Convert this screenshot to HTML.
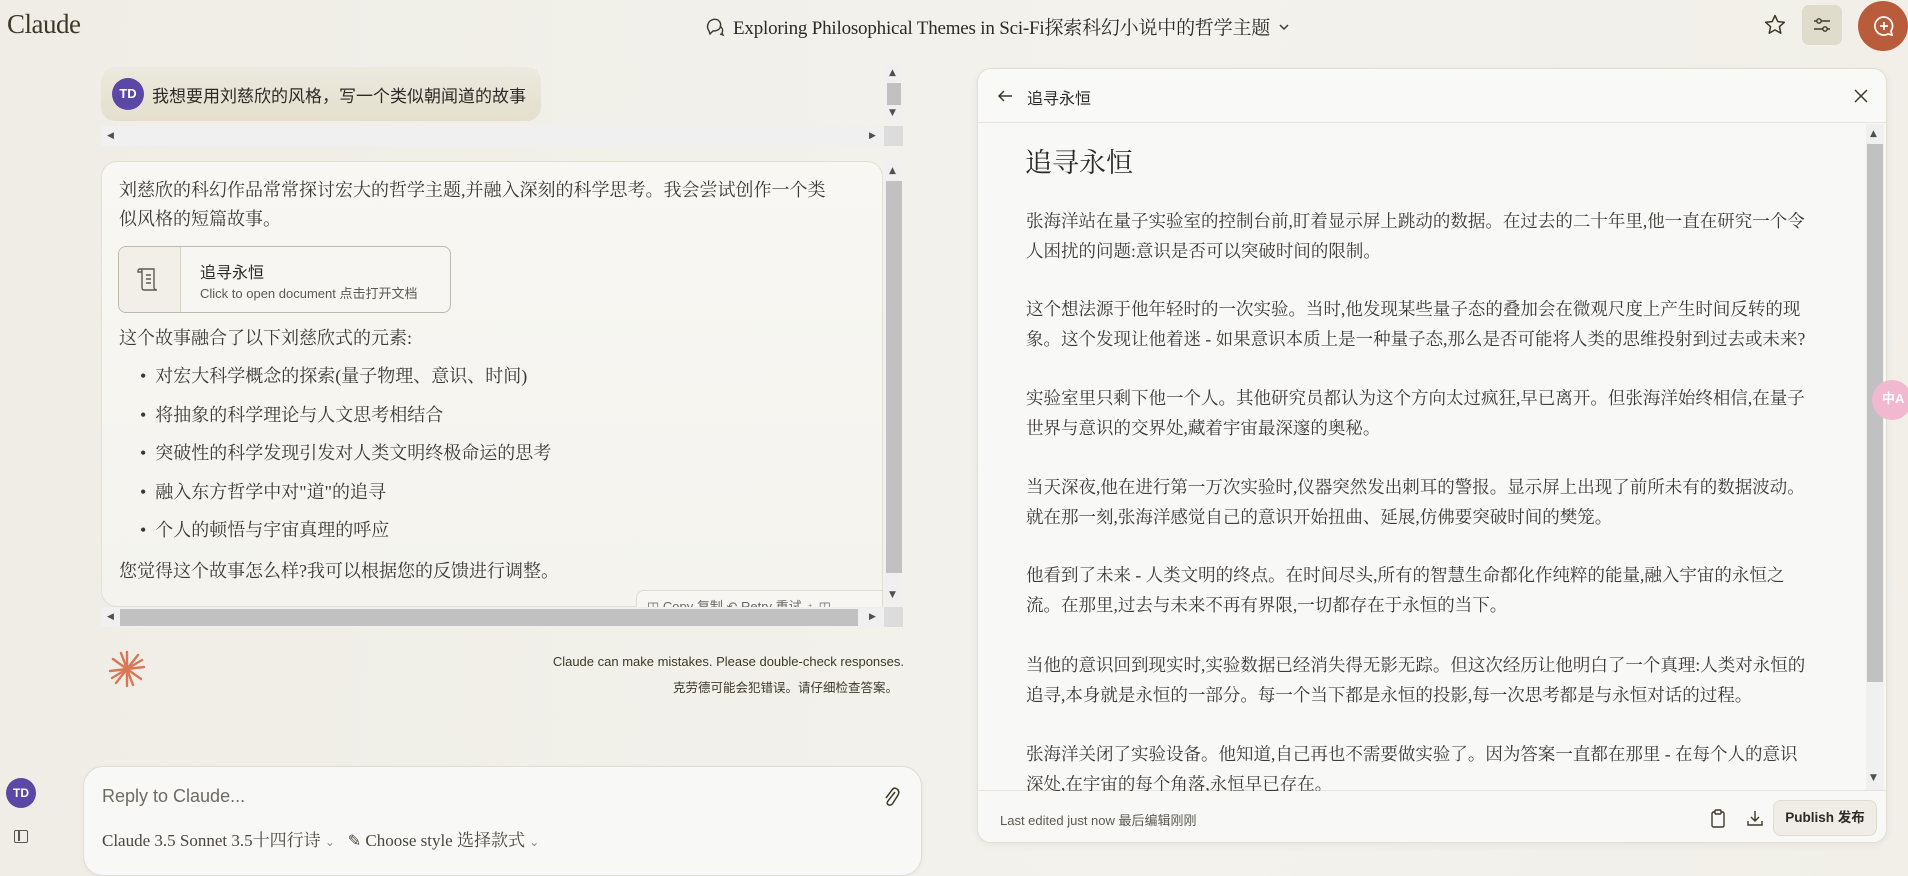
<!DOCTYPE html>
<html><head><meta charset="utf-8"><style>
*{margin:0;padding:0;box-sizing:border-box}
body{width:1908px;height:863px;overflow:hidden;background:linear-gradient(90deg,#efede5 0%,#f3f2ed 60%,#f1efe8 100%);font-family:"Liberation Serif","Noto Serif CJK SC",serif;color:#2b2a27;position:relative}
.a{position:absolute}
.sans{font-family:"Liberation Sans","Noto Sans CJK SC",sans-serif}
.nw{white-space:nowrap}
.sb{background:#f0f0f0}
.thumb{background:#c1c1c1}
.ar{position:absolute;font-size:9px;color:#505050;font-family:"DejaVu Sans",sans-serif;line-height:10px}
</style></head><body>
<div class="a" style="left:7px;top:9px;font-size:27px;color:#3d3929;letter-spacing:-0.5px">Claude</div>
<div class="a nw" style="left:705px;top:13px;font-size:19px;color:#2b2a27;display:flex;align-items:center;gap:8px;letter-spacing:-0.2px">
<svg width="20" height="20" viewBox="0 0 20 20" fill="none" stroke="#3d3929" stroke-width="1.4"><path d="M4 14 Q1 10 4 5 Q8 1 13 3 Q17 6 15 11 Q13 14 8 14 L5 17 Z"/><path d="M15 9 Q19 12 17 16 L18 18 L15 17"/></svg>
<span>Exploring Philosophical Themes in Sci-Fi探索科幻小说中的哲学主题</span><svg width="12" height="12" viewBox="0 0 12 12" fill="none" stroke="#3d3929" stroke-width="1.5"><path d="M2 4 L6 8 L10 4"/></svg></div>
<svg class="a" style="left:1763px;top:13px" width="24" height="24" viewBox="0 0 24 24" fill="none" stroke="#3d3929" stroke-width="1.5" stroke-linejoin="round"><path d="M12 2.5 L14.8 8.6 L21.3 9.3 L16.4 13.7 L17.8 20.2 L12 16.9 L6.2 20.2 L7.6 13.7 L2.7 9.3 L9.2 8.6 Z"/></svg>
<div class="a" style="left:1802px;top:5px;width:40px;height:40px;border-radius:7px;background:#e0dccb"></div>
<svg class="a" style="left:1812px;top:15px" width="20" height="20" viewBox="0 0 20 20" fill="none" stroke="#3d3929" stroke-width="1.4"><path d="M2 6 H18 M2 14 H18"/><circle cx="7" cy="6" r="2.2" fill="#e0dccb"/><circle cx="13" cy="14" r="2.2" fill="#e0dccb"/></svg>
<div class="a" style="left:1858px;top:1px;width:50px;height:50px;border-radius:50%;background:#b85c3c"></div>
<svg class="a" style="left:1872px;top:14px" width="24" height="24" viewBox="0 0 24 24" fill="none" stroke="#fff" stroke-width="1.7"><path d="M12 3 A9 9 0 1 0 16 20 L20 21 L19 17 A9 9 0 0 0 12 3Z"/><path d="M12 8 V16 M8 12 H16"/></svg>

<div class="a" style="left:101px;top:67px;width:440px;height:54px;border-radius:14px;background:linear-gradient(180deg,#eceadf,#e4dfcd)"></div>
<div class="a sans" style="left:112px;top:78px;width:32px;height:32px;border-radius:50%;background:#5b47a6;color:#fff;font-weight:bold;font-size:13px;line-height:32px;text-align:center">TD</div>
<div class="a nw" style="left:152px;top:82px;font-size:17px;font-family:'Liberation Sans','Noto Sans CJK SC',sans-serif;color:#2b2a27">我想要用刘慈欣的风格，写一个类似朝闻道的故事</div>
<div class="a sb" style="left:885px;top:63px;width:18px;height:57px"></div>
<div class="a thumb" style="left:887px;top:83px;width:14px;height:22px"></div>
<div class="ar" style="left:889px;top:68px">▲</div><div class="ar" style="left:889px;top:108px">▼</div>
<div class="a sb" style="left:101px;top:126px;width:783px;height:20px"></div>
<div class="ar" style="left:107px;top:131px">◀</div><div class="ar" style="left:869px;top:131px">▶</div>
<div class="a sb" style="left:884px;top:126px;width:19px;height:20px;background:#dcdcdc"></div>

<div class="a" style="left:101px;top:161px;width:782px;height:446px;border:1px solid #e2dfd5;border-radius:16px;background:linear-gradient(180deg,#f8f7f3,#f4f3ee)"></div>
<div class="a sb" style="left:885px;top:161px;width:18px;height:444px"></div>
<div class="a thumb" style="left:886px;top:181px;width:16px;height:392px"></div>
<div class="ar" style="left:889px;top:166px">▲</div><div class="ar" style="left:889px;top:590px">▼</div>
<div style="position:absolute;left:119px;top:176px;font-size:18px;line-height:29px;color:#3a3935" class="nw">刘慈欣的科幻作品常常探讨宏大的哲学主题,并融入深刻的科学思考。我会尝试创作一个类<br>似风格的短篇故事。</div>
<div class="a" style="left:118px;top:246px;width:333px;height:67px;border:1px solid #bdb9ac;border-radius:8px;background:#f7f6f2"></div>
<div class="a" style="left:119px;top:247px;width:62px;height:65px;border-right:1px solid #d6d2c6;background:#f1efe8;border-radius:7px 0 0 7px"></div>
<svg class="a" style="left:137px;top:266px" width="24" height="26" viewBox="0 0 24 26" fill="none" stroke="#5d5a52" stroke-width="1.4"><path d="M3 3 H17 V21 Q17 24 20 24 H7 Q5 24 5 21 V5 Q5 3 3 3 Q1 3 1 5 V6 H5"/><path d="M9 9 H14 M9 13 H14 M9 17 H14"/></svg>
<div class="a nw" style="left:200px;top:259px;font-size:16px;color:#2b2a27;font-family:'Liberation Sans','Noto Sans CJK SC',sans-serif">追寻永恒</div>
<div class="a nw sans" style="left:200px;top:283px;font-size:13px;color:#5d5a52">Click to open document 点击打开文档</div>
<div class="a nw" style="left:119px;top:324px;font-size:18px;line-height:29px;color:#3a3935">这个故事融合了以下刘慈欣式的元素:</div>
<div class="a nw" style="left:140px;top:357px;font-size:18px;line-height:38.5px;color:#3a3935">
<div>•&nbsp;&nbsp;对宏大科学概念的探索(量子物理、意识、时间)</div>
<div>•&nbsp;&nbsp;将抽象的科学理论与人文思考相结合</div>
<div>•&nbsp;&nbsp;突破性的科学发现引发对人类文明终极命运的思考</div>
<div>•&nbsp;&nbsp;融入东方哲学中对"道"的追寻</div>
<div>•&nbsp;&nbsp;个人的顿悟与宇宙真理的呼应</div></div>
<div class="a nw" style="left:119px;top:557px;font-size:18px;line-height:29px;color:#3a3935">您觉得这个故事怎么样?我可以根据您的反馈进行调整。</div>
<div class="a" style="left:636px;top:590px;width:247px;height:18px;border:1px solid #dedbd1;border-bottom:none;border-radius:8px 0 0 0;background:#f7f6f2;overflow:hidden"><div class="sans nw" style="font-size:13px;color:#666;padding:5px 0 0 10px">◫ Copy 复制 ↶ Retry 重试 ♁ ◫</div></div>
<div class="a sb" style="left:101px;top:607px;width:783px;height:20px"></div>
<div class="a thumb" style="left:120px;top:609px;width:738px;height:17px"></div>
<div class="ar" style="left:107px;top:612px">◀</div><div class="ar" style="left:869px;top:612px">▶</div>
<div class="a sb" style="left:884px;top:607px;width:19px;height:20px;background:#dcdcdc"></div>
<svg class="a" style="left:108px;top:650px" width="38" height="38" viewBox="0 0 38 38" stroke="#d97757" stroke-width="2.4" stroke-linecap="round"><path d="M19 2 L19 36 M5 9 L33 29 M2 21 L36 17 M8 33 L30 5 M13 3 L25 35 M34 10 L4 28"/></svg>
<div class="a nw sans" style="right:1004px;top:654px;font-size:13px;color:#3d3929;text-align:right">Claude can make mistakes. Please double-check responses.</div>
<div class="a nw sans" style="right:1010px;top:677px;font-size:12.5px;color:#3d3929">克劳德可能会犯错误。请仔细检查答案。</div>

<div class="a sans" style="left:6px;top:778px;width:30px;height:30px;border-radius:50%;background:#5b47a6;color:#fff;font-weight:bold;font-size:12px;line-height:30px;text-align:center">TD</div>
<div class="a" style="left:14px;top:830px;width:14px;height:13px;border:1.5px solid #555;border-radius:2px"><div style="position:absolute;left:3px;top:0;width:1.5px;height:10px;background:#555"></div></div>

<div class="a" style="left:83px;top:766px;width:839px;height:110px;border:1px solid #e0ddd3;border-radius:20px;background:#f8f8f6;box-shadow:0 2px 6px rgba(0,0,0,.04)"></div>
<div class="a nw sans" style="left:102px;top:786px;font-size:18px;color:#6e6b63">Reply to Claude...</div>
<svg class="a" style="left:882px;top:786px" width="18" height="22" viewBox="0 0 18 22" fill="none" stroke="#3d3929" stroke-width="1.5"><path d="M13 6 L6 15 Q4 18 7 19 Q9 20 11 17 L16 9 Q18 5 15 3 Q12 1 10 4 L4 12"/></svg>
<div class="a nw" style="left:102px;top:826px;font-size:17px;color:#4a4740">Claude 3.5 Sonnet 3.5十四行诗 <span style="font-size:12px;color:#888">⌄</span>&nbsp;&nbsp;&nbsp;<span style="font-size:16px">✎</span> Choose style 选择款式 <span style="font-size:12px;color:#888">⌄</span></div>

<div class="a" style="left:977px;top:68px;width:910px;height:775px;border:1px solid #e1ded4;border-radius:14px;background:#f8f8f6;box-shadow:0 2px 8px rgba(0,0,0,.06);overflow:hidden">
<div style="position:absolute;left:0;top:0;width:100%;height:54px;border-bottom:1px solid #e6e4dd;background:#f9f9f7"></div>
<svg style="position:absolute;left:18px;top:18px" width="18" height="18" viewBox="0 0 18 18" fill="none" stroke="#3d3929" stroke-width="1.5"><path d="M16 9 H3 M8 4 L3 9 L8 14"/></svg>
<div class="nw" style="position:absolute;left:49px;top:16px;font-size:16px;color:#2b2a27;font-family:'Liberation Sans','Noto Sans CJK SC',sans-serif">追寻永恒</div>
<svg style="position:absolute;left:876px;top:20px" width="14" height="14" viewBox="0 0 14 14" stroke="#3d3929" stroke-width="1.5"><path d="M1 1 L13 13 M13 1 L1 13"/></svg>
<div style="position:absolute;left:888px;top:55px;width:18px;height:666px;background:#f0f0f0"></div>
<div style="position:absolute;left:889px;top:75px;width:16px;height:538px;background:#c1c1c1"></div>
<div class="ar" style="left:892px;top:60px">▲</div><div class="ar" style="left:892px;top:704px">▼</div>
<div style="position:absolute;left:0;top:721px;width:100%;height:1px;background:#e6e4dd"></div>
<div class="nw" style="position:absolute;left:47px;top:72px;font-size:27px;color:#2b2a27">追寻永恒</div>
<div class="nw" style="position:absolute;left:48px;top:137px;font-size:17.5px;line-height:30px;color:#3a3935">
<div>张海洋站在量子实验室的控制台前,盯着显示屏上跳动的数据。在过去的二十年里,他一直在研究一个令<br>人困扰的问题:意识是否可以突破时间的限制。</div>
<div style="margin-top:28px">这个想法源于他年轻时的一次实验。当时,他发现某些量子态的叠加会在微观尺度上产生时间反转的现<br>象。这个发现让他着迷 - 如果意识本质上是一种量子态,那么是否可能将人类的思维投射到过去或未来?</div>
<div style="margin-top:29px">实验室里只剩下他一个人。其他研究员都认为这个方向太过疯狂,早已离开。但张海洋始终相信,在量子<br>世界与意识的交界处,藏着宇宙最深邃的奥秘。</div>
<div style="margin-top:29px">当天深夜,他在进行第一万次实验时,仪器突然发出刺耳的警报。显示屏上出现了前所未有的数据波动。<br>就在那一刻,张海洋感觉自己的意识开始扭曲、延展,仿佛要突破时间的樊笼。</div>
<div style="margin-top:28px">他看到了未来 - 人类文明的终点。在时间尽头,所有的智慧生命都化作纯粹的能量,融入宇宙的永恒之<br>流。在那里,过去与未来不再有界限,一切都存在于永恒的当下。</div>
<div style="margin-top:30px">当他的意识回到现实时,实验数据已经消失得无影无踪。但这次经历让他明白了一个真理:人类对永恒的<br>追寻,本身就是永恒的一部分。每一个当下都是永恒的投影,每一次思考都是与永恒对话的过程。</div>
<div style="margin-top:29px">张海洋关闭了实验设备。他知道,自己再也不需要做实验了。因为答案一直都在那里 - 在每个人的意识<br>深处,在宇宙的每个角落,永恒早已存在。</div>
</div>
<div style="position:absolute;left:0;top:722px;width:100%;height:60px;background:#f8f8f6"></div>
<div class="nw sans" style="position:absolute;left:22px;top:741px;font-size:13px;color:#5d5a52">Last edited just now 最后编辑刚刚</div>
<svg style="position:absolute;left:732px;top:740px" width="16" height="20" viewBox="0 0 16 20" fill="none" stroke="#3d3929" stroke-width="1.4"><rect x="2" y="3" width="12" height="15" rx="1.5"/><rect x="5" y="1" width="6" height="4" rx="1" fill="#f8f8f6"/></svg>
<svg style="position:absolute;left:768px;top:740px" width="18" height="18" viewBox="0 0 18 18" fill="none" stroke="#3d3929" stroke-width="1.4"><path d="M9 2 V12 M5 8 L9 12 L13 8 M2 12 V16 H16 V12"/></svg>
<div class="nw sans" style="position:absolute;left:795px;top:731px;width:104px;height:36px;border:1px solid #dedbd1;border-radius:8px;background:#efede6;font-size:13.5px;font-weight:bold;color:#2b2a27;text-align:center;line-height:34px">Publish 发布</div>
</div>
<div class="a" style="left:1872px;top:380px;width:40px;height:40px;border-radius:50%;background:#f2b8cf"></div>
<div class="a nw sans" style="left:1882px;top:388px;font-size:13px;color:#fff;font-weight:bold">中A</div>
</body></html>
